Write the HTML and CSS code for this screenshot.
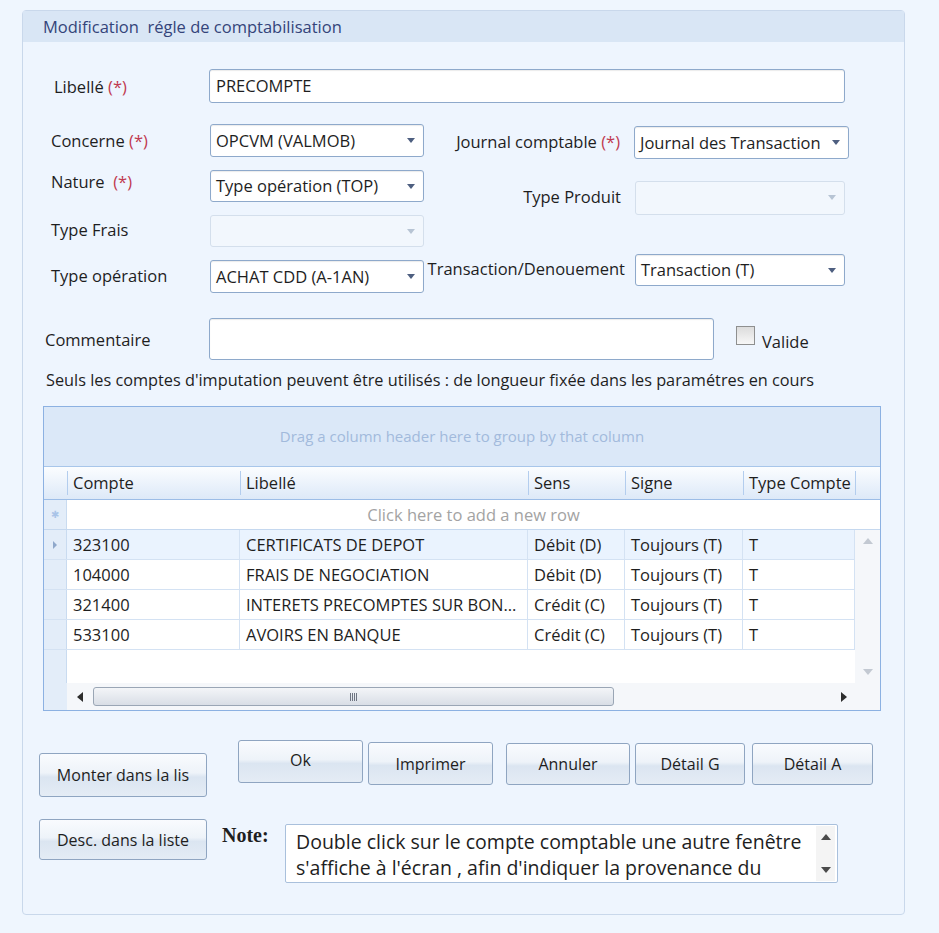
FILE: index.html
```html
<!DOCTYPE html>
<html lang="fr">
<head>
<meta charset="UTF-8">
<title>Modification régle de comptabilisation</title>
<link rel="stylesheet" href="styles.css">
</head>
<body>
<div class="panel">
  <div class="panel-title">Modification&nbsp; régle de comptabilisation</div>

  <div class="content">
    <div class="line line-libelle">
      <label class="lbl lbl-libelle">Libellé <span class="req">(*)</span></label>
      <div class="txt txt-libelle">PRECOMPTE</div>
    </div>

    <div class="cols">
      <div class="col-left">
        <div class="field f-concerne">
          <label class="lbl">Concerne <span class="req">(*)</span></label>
          <div class="combo"><span>OPCVM (VALMOB)</span><i class="arrow"></i></div>
        </div>
        <div class="field f-nature">
          <label class="lbl lbl-up">Nature &nbsp;<span class="req">(*)</span></label>
          <div class="combo"><span>Type opération (TOP)</span><i class="arrow"></i></div>
        </div>
        <div class="field f-frais">
          <label class="lbl">Type Frais</label>
          <div class="combo disabled"><span></span><i class="arrow"></i></div>
        </div>
        <div class="field f-typeop">
          <label class="lbl">Type opération</label>
          <div class="combo"><span>ACHAT CDD (A-1AN)</span><i class="arrow"></i></div>
        </div>
      </div>

      <div class="col-right">
        <div class="field f-journal">
          <label class="lbl">Journal comptable <span class="req">(*)</span></label>
          <div class="combo combo-journal"><span>Journal des Transaction</span><i class="arrow"></i></div>
        </div>
        <div class="field f-produit">
          <label class="lbl">Type Produit</label>
          <div class="combo combo-right disabled"><span></span><i class="arrow"></i></div>
        </div>
        <div class="field f-trans">
          <label class="lbl">Transaction/Denouement</label>
          <div class="combo combo-right"><span>Transaction (T)</span><i class="arrow"></i></div>
        </div>
      </div>
    </div>

    <div class="line line-comment">
      <label class="lbl lbl-comment">Commentaire</label>
      <div class="txt txt-comment"></div>
      <span class="check"></span>
      <span class="check-label">Valide</span>
    </div>

    <p class="info">Seuls les comptes d'imputation peuvent être utilisés : de longueur fixée dans les paramétres en cours</p>

    <div class="grid">
      <div class="group-panel">Drag a column header here to group by that column</div>
      <div class="row hdr">
        <div class="c0"></div>
        <div class="c1"><span>Compte</span></div>
        <div class="c2"><span>Libellé</span></div>
        <div class="c3"><span>Sens</span></div>
        <div class="c4"><span>Signe</span></div>
        <div class="c5"><span>Type Compte</span></div>
        <div class="c6"><span></span></div>
      </div>
      <div class="row newrow">
        <div class="c0 ind">&#x2731;</div>
        <div class="newrow-text">Click here to add a new row</div>
      </div>
      <div class="gbody">
        <div class="rows">
          <div class="row data current">
            <div class="c0 ind"><i class="tri-right"></i></div>
            <div class="c1">323100</div>
            <div class="c2">CERTIFICATS DE DEPOT</div>
            <div class="c3">Débit (D)</div>
            <div class="c4">Toujours (T)</div>
            <div class="c5">T</div>
          </div>
          <div class="row data">
            <div class="c0 ind"></div>
            <div class="c1">104000</div>
            <div class="c2">FRAIS DE NEGOCIATION</div>
            <div class="c3">Débit (D)</div>
            <div class="c4">Toujours (T)</div>
            <div class="c5">T</div>
          </div>
          <div class="row data">
            <div class="c0 ind"></div>
            <div class="c1">321400</div>
            <div class="c2">INTERETS PRECOMPTES SUR BON...</div>
            <div class="c3">Crédit (C)</div>
            <div class="c4">Toujours (T)</div>
            <div class="c5">T</div>
          </div>
          <div class="row data">
            <div class="c0 ind"></div>
            <div class="c1">533100</div>
            <div class="c2">AVOIRS EN BANQUE</div>
            <div class="c3">Crédit (C)</div>
            <div class="c4">Toujours (T)</div>
            <div class="c5">T</div>
          </div>
          <div class="row filler">
            <div class="c0 ind"></div>
          </div>
        </div>
        <div class="vscroll">
          <i class="tri-up light"></i>
          <i class="tri-down light"></i>
        </div>
      </div>
      <div class="row hscroll">
        <div class="c0 ind"></div>
        <div class="htrack">
          <i class="tri-left"></i>
          <div class="thumb"><span class="grip"></span></div>
          <i class="tri-right dark"></i>
        </div>
        <div class="corner"></div>
      </div>
    </div>

    <div class="bottom">
      <div class="side-buttons">
        <button class="btn btn-monter">Monter dans la lis</button>
        <button class="btn btn-desc">Desc. dans la liste</button>
      </div>
      <div class="main-bottom">
        <div class="actions">
          <button class="btn btn-ok">Ok</button>
          <button class="btn btn-imprimer">Imprimer</button>
          <button class="btn btn-annuler">Annuler</button>
          <button class="btn btn-detailg">Détail G</button>
          <button class="btn btn-detaila">Détail A</button>
        </div>
        <div class="note-line">
          <span class="note-label">Note:</span>
          <div class="note-box">
            <div class="note-text">Double click sur le compte comptable une autre fenêtre s'affiche à l'écran , afin d'indiquer la provenance du</div>
            <div class="note-scroll">
              <i class="tri-up dark"></i>
              <i class="tri-down dark"></i>
            </div>
          </div>
        </div>
      </div>
    </div>
  </div>
</div>
</body>
</html>
```

FILE: styles.css
```css
body {
  margin: 0;
  background-color: #eff6fe;
  font-family: "Open Sans", "Noto Sans", sans-serif;
  font-size: 16.5px;
  color: #1e1e1e;
}

.panel {
  margin: 10px 0 0 22px;
  width: 883px;
  height: 905px;
  box-sizing: border-box;
  border: 1px solid #c9d8eb;
  border-radius: 4px;
  background-color: #eef5fe;
}

.panel-title {
  height: 31px;
  line-height: 31px;
  padding-left: 20px;
  background-color: #d9e6f5;
  color: #34447a;
  font-size: 16.5px;
}

.content {
  padding-left: 28px;
}

.lbl {
  display: block;
  white-space: nowrap;
}

.req {
  color: #c0394e;
}

.line {
  display: flex;
  align-items: center;
}

.line-libelle {
  margin-top: 27px;
}

.lbl-libelle {
  width: 155px;
  padding-left: 3px;
}

.txt {
  box-sizing: border-box;
  background-color: #fff;
  border: 1px solid #8ea9cb;
  border-radius: 3px;
  box-shadow: inset 0 1px 1px rgba(0, 0, 0, 0.08);
  padding-left: 6px;
}

.txt-libelle {
  width: 636px;
  height: 34px;
  line-height: 32px;
}

/* deux colonnes de champs */
.cols {
  display: flex;
  margin-top: 21px;
}

.col-left {
  width: 373px;
}

.col-right {
  width: 425px;
}

.field {
  display: flex;
  align-items: center;
}

.field .lbl {
  margin-top: -3px;
}

.col-left .lbl {
  width: 159px;
}

.col-left .field + .field {
  margin-top: 13px;
}

.f-concerne .lbl {
  margin-top: 0;
}

.col-left .lbl-up {
  margin-top: -10px;
}

.col-right .lbl {
  flex: 1;
  text-align: right;
  padding-right: 14px;
}

.f-journal {
  margin-top: 2px;
}

.f-produit {
  margin-top: 22px;
}

.f-trans {
  margin-top: 39px;
}

.f-trans .lbl {
  padding-right: 10px;
}

.combo {
  position: relative;
  box-sizing: border-box;
  width: 214px;
  height: 33px;
  line-height: 31px;
  padding-left: 5px;
  background-color: #fff;
  border: 1px solid #8ea9cb;
  border-radius: 3px;
  box-shadow: inset 0 1px 1px rgba(0, 0, 0, 0.08);
  white-space: nowrap;
  overflow: hidden;
}

.f-nature .combo,
.f-frais .combo,
.f-trans .combo {
  height: 32px;
  line-height: 30px;
}

.f-produit .combo {
  height: 34px;
}

.combo-journal {
  width: 215px;
}

.combo-right {
  width: 210px;
  margin-right: 4px;
}

.combo.disabled {
  background-color: #f2f7fd;
  border-color: #d4dfec;
  box-shadow: none;
}

.arrow {
  position: absolute;
  right: 8px;
  top: 13px;
  width: 0;
  height: 0;
  border-left: 4px solid transparent;
  border-right: 4px solid transparent;
  border-top: 5px solid #4e5f80;
}

.disabled .arrow {
  border-top-color: #b7c4d4;
}

/* commentaire */
.line-comment {
  margin-top: 25px;
}

.lbl-comment {
  width: 164px;
  margin-left: -6px;
}

.txt-comment {
  width: 505px;
  height: 42px;
}

.check {
  width: 17px;
  height: 17px;
  margin-left: 22px;
  margin-top: -7px;
  border: 1px solid #8e8f8f;
  background: linear-gradient(#dcdcdc, #f7f7f7);
}

.check-label {
  margin-left: 7px;
  margin-top: 4px;
}

.info {
  margin: 9px 0 0 -5px;
  font-size: 16.3px;
  line-height: 22px;
  white-space: nowrap;
}

/* grille */
.grid {
  margin: 15px 0 0 -8px;
  width: 836px;
  border: 1px solid #8cb1e2;
  background-color: #fff;
}

.group-panel {
  height: 59px;
  line-height: 59px;
  text-align: center;
  background-color: #dbe8f8;
  border-bottom: 1px solid #a8c6ea;
  color: #a2badc;
  font-size: 15px;
}

.row {
  display: flex;
}

.c0 { width: 23px; flex: none; }
.c1 { width: 173px; flex: none; }
.c2 { width: 288px; flex: none; }
.c3 { width: 97px; flex: none; }
.c4 { width: 118px; flex: none; }
.c5 { width: 112px; flex: none; }
.c6 { width: 25px; flex: none; }

.hdr {
  height: 32px;
  background: linear-gradient(#fbfdff, #dde9f8);
  border-bottom: 1px solid #9cbde7;
}

.hdr > div {
  display: flex;
  align-items: center;
}

.hdr span {
  display: block;
  width: 100%;
  height: 24px;
  line-height: 24px;
  padding-left: 5px;
  border-left: 1px solid #b3cdee;
  white-space: nowrap;
}

.ind {
  box-sizing: border-box;
  background-color: #e3edf9;
  border-right: 1px solid #c9dbf0;
}

.newrow {
  height: 29px;
  border-bottom: 1px solid #c5d8ef;
}

.newrow .ind {
  color: #a9c4e8;
  font-size: 10px;
  line-height: 29px;
  text-align: center;
}

.newrow-text {
  flex: 1;
  text-align: center;
  line-height: 29px;
  color: #a3a3a3;
}

.gbody {
  display: flex;
}

.rows {
  width: 811px;
}

.data {
  height: 29px;
  border-bottom: 1px solid #d4e2f3;
}

.data > div {
  box-sizing: border-box;
  line-height: 29px;
  padding-left: 6px;
  border-right: 1px solid #d4e2f3;
  white-space: nowrap;
}

.data > .c0 {
  padding-left: 0;
  border-right-color: #c9dbf0;
  display: flex;
  align-items: center;
  justify-content: center;
}

.data.current > div {
  background-color: #eaf3fe;
}

.data.current > .c0 {
  background-color: #e3edf9;
}

.filler {
  height: 33px;
}

.vscroll {
  width: 25px;
  display: flex;
  flex-direction: column;
  justify-content: space-between;
  align-items: center;
  padding: 8px 0;
  box-sizing: border-box;
  background-color: #f5f7fa;
}

.hscroll {
  height: 27px;
}

.hscroll .ind {
  border-right: none;
}

.htrack {
  width: 788px;
  display: flex;
  align-items: center;
  padding: 0 8px 0 10px;
  box-sizing: border-box;
  background-color: #f5f7fa;
}

.thumb {
  width: 521px;
  height: 19px;
  margin-left: 10px;
  box-sizing: border-box;
  border: 1px solid #9aa6b5;
  border-radius: 3px;
  background: linear-gradient(#f3f5f8, #d9dee6);
  display: flex;
  justify-content: center;
  align-items: center;
}

.grip {
  width: 7px;
  height: 8px;
  background: repeating-linear-gradient(90deg, #6e7582 0 1px, transparent 1px 2px);
}

.htrack .tri-right {
  margin-left: auto;
}

.corner {
  width: 25px;
  background-color: #f5f7fa;
}

.tri-right {
  width: 0;
  height: 0;
  border-top: 4px solid transparent;
  border-bottom: 4px solid transparent;
  border-left: 4px solid #8fa8cb;
}

.tri-right.dark {
  border-top-width: 5px;
  border-bottom-width: 5px;
  border-left: 6px solid #2d2d2d;
}

.tri-left {
  width: 0;
  height: 0;
  border-top: 5px solid transparent;
  border-bottom: 5px solid transparent;
  border-right: 6px solid #2d2d2d;
}

.tri-up {
  width: 0;
  height: 0;
  border-left: 5px solid transparent;
  border-right: 5px solid transparent;
  border-bottom: 6px solid #2d2d2d;
}

.tri-down {
  width: 0;
  height: 0;
  border-left: 5px solid transparent;
  border-right: 5px solid transparent;
  border-top: 6px solid #2d2d2d;
}

.tri-up.light {
  border-bottom-color: #c3c9d2;
}

.tri-down.light {
  border-top-color: #c3c9d2;
}

.tri-up.dark {
  border-bottom-color: #4a4a4a;
}

.tri-down.dark {
  border-top-color: #4a4a4a;
}

/* boutons et note */
.bottom {
  display: flex;
  margin-left: -12px;
}

.side-buttons {
  display: flex;
  flex-direction: column;
  width: 168px;
}

.btn {
  box-sizing: border-box;
  font-family: "Open Sans", "Noto Sans", sans-serif;
  font-size: 16px;
  color: #1e1e1e;
  border: 1px solid #8fa5c1;
  border-radius: 3px;
  background: linear-gradient(#f9fbfe 0%, #eef3f9 45%, #dbe5f1 55%, #e4ecf5 100%);
  padding: 0;
  white-space: nowrap;
}

.btn-monter {
  width: 168px;
  height: 44px;
  margin-top: 42px;
}

.btn-desc {
  width: 168px;
  height: 41px;
  margin-top: 22px;
}

.main-bottom {
  display: flex;
  flex-direction: column;
}

.actions {
  display: flex;
  align-items: flex-start;
  margin-left: 31px;
  margin-top: 29px;
}

.btn-ok {
  width: 125px;
  height: 43px;
  padding-bottom: 4px;
}

.btn-imprimer {
  width: 125px;
  height: 43px;
  margin: 2px 0 0 5px;
}

.btn-annuler {
  width: 124px;
  height: 42px;
  margin: 3px 0 0 13px;
}

.btn-detailg {
  width: 110px;
  height: 42px;
  margin: 3px 0 0 5px;
}

.btn-detaila {
  width: 121px;
  height: 42px;
  margin: 3px 0 0 7px;
}

.note-line {
  display: flex;
  align-items: flex-start;
  margin-top: 39px;
  margin-left: 15px;
}

.note-label {
  width: 63px;
  margin-top: 0;
  font-family: "Liberation Serif", serif;
  font-weight: bold;
  font-size: 20px;
}

.note-box {
  display: flex;
  width: 553px;
  height: 59px;
  box-sizing: border-box;
  border: 1px solid #a9c0dc;
  border-radius: 2px;
  background-color: #fff;
  overflow: hidden;
}

.note-text {
  flex: 1;
  padding: 4px 0 0 10px;
  font-size: 19.5px;
  line-height: 26px;
}

.note-scroll {
  width: 19px;
  margin: 1px 2px 1px 0;
  background-color: #f4f4f4;
  display: flex;
  flex-direction: column;
  justify-content: space-between;
  align-items: center;
  padding: 8px 0;
  box-sizing: border-box;
}
```
